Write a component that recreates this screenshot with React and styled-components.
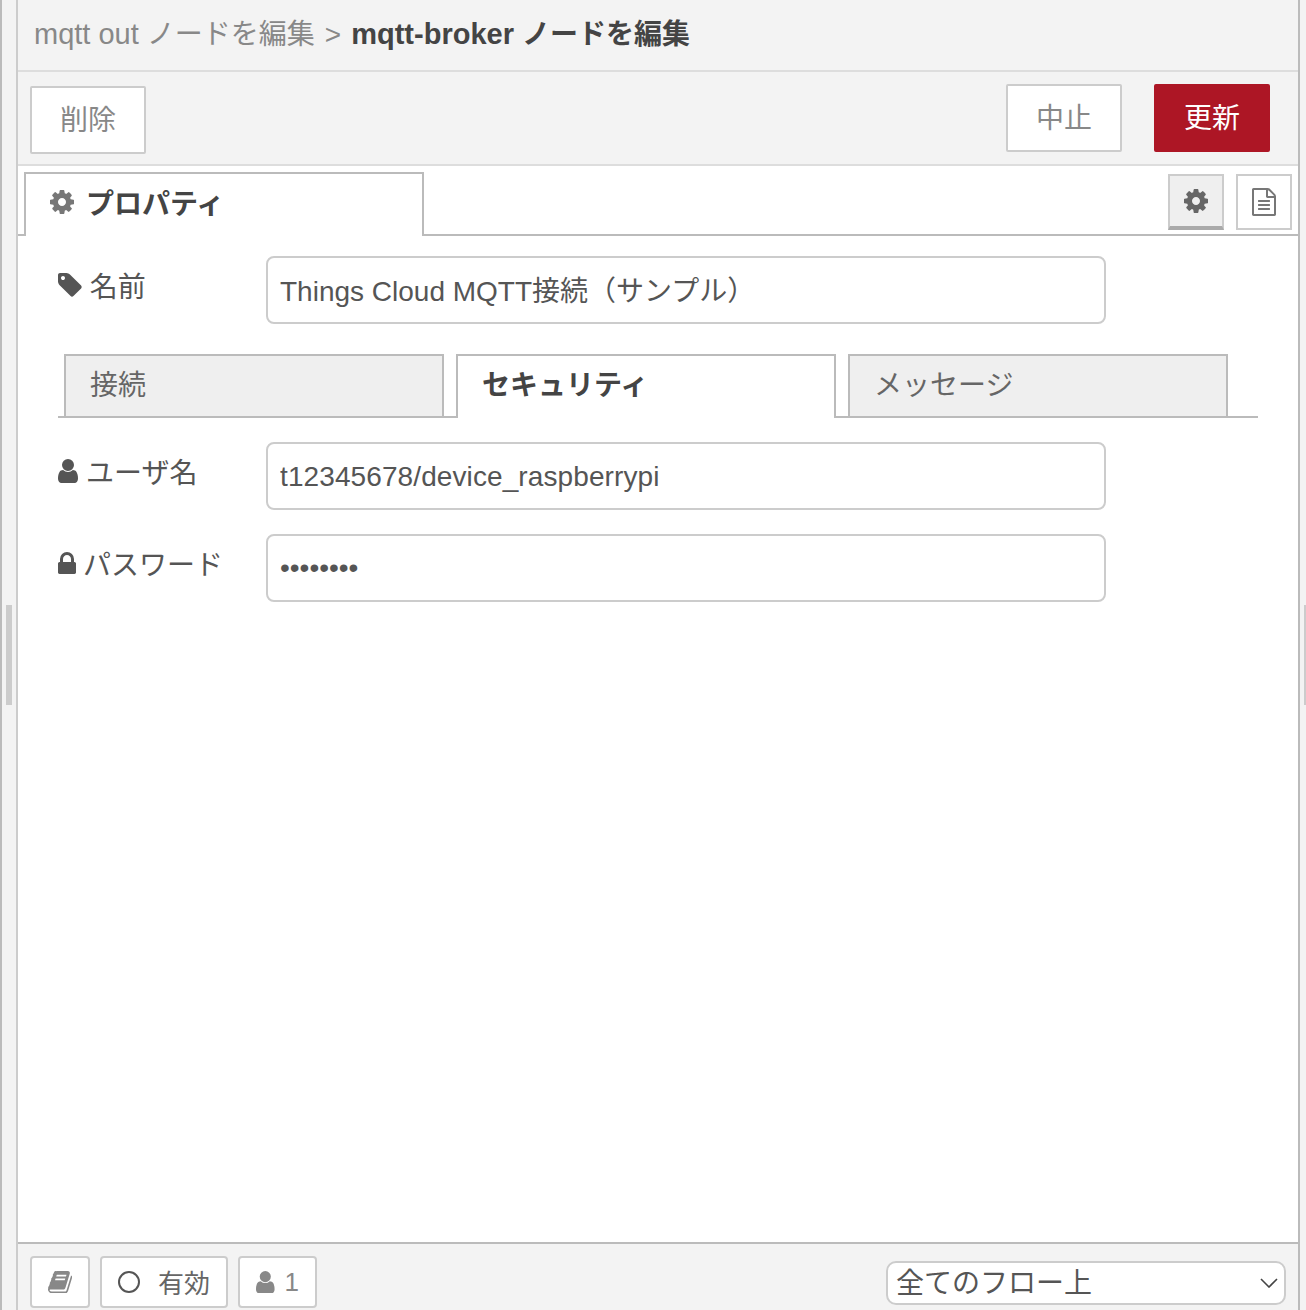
import React from 'react'
import styled, { createGlobalStyle } from 'styled-components'

const FONT = `"Liberation Sans", "Noto Sans CJK JP", sans-serif`

const Global = createGlobalStyle`
  html, body { margin: 0; padding: 0; background: #fff; }
  body { font-family: ${FONT}; overflow: hidden; }
  * { box-sizing: border-box; }
`

// font-awesome 4 glyphs, the tray uses them everywhere. box = x y w h of the glyph
const ICONS = {
  cog: {
    box: [128, 128, 1536, 1536],
    d: 'M1152 896q0-106-75-181t-181-75-181 75-75 181 75 181 181 75 181-75 75-181zm512-109v222q0 12-8 23t-20 13l-185 28q-19 54-39 91 35 50 107 138 10 12 10 25t-9 23q-27 37-99 108t-94 71q-12 0-26-9l-138-108q-44 23-91 38-16 136-29 186-7 28-36 28h-222q-14 0-24.500-8.500t-11.500-21.500l-28-184q-49-16-90-37l-141 107q-10 9-25 9-14 0-25-11-126-114-165-168-7-10-7-23 0-12 8-23 15-21 51-66.500t54-70.500q-27-50-41-99l-183-27q-13-2-21-12.500t-8-23.500v-222q0-12 8-23t19-13l186-28q14-46 39-92-40-57-107-138-10-12-10-24 0-10 9-23 26-36 98.500-107.500t94.500-71.500q13 0 26 10l138 107q44-23 91-38 16-136 29-186 7-28 36-28h222q14 0 24.500 8.500t11.500 21.500l28 184q49 16 90 37l142-107q9-9 24-9 13 0 25 10 129 119 165 170 7 8 7 22 0 12-8 23-15 21-51 66.500t-54 70.500q26 50 41 98l183 28q13 2 21 12.500t8 23.500z'
  },
  user: {
    box: [256, 128, 1280, 1536],
    d: 'M1536 1399q0 109-62.500 187t-150.500 78h-854q-88 0-150.500-78t-62.500-187q0-85 8.500-160.500t31.500-152 58.500-131 94-89 134.500-34.500q131 128 313 128t313-128q76 0 134.500 34.500t94 89 58.500 131 31.500 152 8.500 160.500zm-256-887q0 159-112.500 271.500t-271.500 112.500-271.500-112.500-112.500-271.500 112.500-271.500 271.500-112.500 271.500 112.500 112.500 271.500z'
  },
  lock: {
    box: [320, 128, 1152, 1408],
    d: 'M640 768h512v-192q0-106-75-181t-181-75-181 75-75 181v192zm832 96v576q0 40-28 68t-68 28h-960q-40 0-68-28t-28-68v-576q0-40 28-68t68-28h32v-192q0-184 132-316t316-132 316 132 132 316v192h32q40 0 68 28t28 68z'
  },
  tag: {
    box: [128, 128, 1515, 1536],
    d: 'M576 448q0-53-37.500-90.500t-90.500-37.500-90.500 37.500-37.500 90.500 37.500 90.500 90.500 37.500 90.500-37.500 37.500-90.500zm1067 576q0 53-37 90l-491 492q-39 37-91 37-53 0-90-37l-715-716q-38-37-64.500-101t-26.500-117v-416q0-52 38-90t90-38h416q53 0 117 26.500t102 64.500l715 714q37 39 37 91z'
  },
  file: {
    box: [128, 0, 1536, 1792],
    d: 'M1596 380q28 28 48 76t20 88v1152q0 40-28 68t-68 28h-1344q-40 0-68-28t-28-68v-1600q0-40 28-68t68-28h896q40 0 88 20t76 48zm-444-244v376h376q-10-29-22-41l-313-313q-12-12-41-22zm384 1528v-1024h-416q-40 0-68-28t-28-68v-416h-768v1536h1280zm-1024-864q0-14 9-23t23-9h704q14 0 23 9t9 23v64q0 14-9 23t-23 9h-704q-14 0-23-9t-9-23v-64zm736 224q14 0 23 9t9 23v64q0 14-9 23t-23 9h-704q-14 0-23-9t-9-23v-64q0-14 9-23t23-9h704zm0 256q14 0 23 9t9 23v64q0 14-9 23t-23 9h-704q-14 0-23-9t-9-23v-64q0-14 9-23t23-9h704z'
  },
  book: {
    box: [64, 128, 1664, 1536],
    d: 'M1703 478q40 57 18 129l-275 906q-19 64-76.500 107.500t-122.500 43.500h-923q-77 0-148.500-53.500t-99.500-131.500q-24-67-2-127 0-4 3-27t4-37q1-8-3-21.500t-3-19.500q2-11 8-21t16.500-23.500 16.500-23.500q23-38 45-91.500t30-91.500q3-10 .5-30t-.5-28q3-11 17-28t17-23q21-36 42-92t25-90q1-9-2.500-32t.5-28q4-13 22-30.500t22-22.500q19-26 42.500-84.500t27.500-96.500q1-8-3-25.500t-2-26.500q2-8 9-18t18-23 17-21q8-12 16.500-30.500t15-35 16-36 19.500-32 26.500-23.500 36-11.500 47.500 5.500l-1 3q38-9 51-9h761q74 0 114 56t18 130l-274 906q-36 119-71.500 153.500t-128.500 34.500h-869q-27 0-38 15-11 16-1 43 24 70 144 70h923q29 0 56-15.500t35-41.500l300-987q7-22 5-57 38 15 59 43zm-1064 2q-4 13 2 22.500t20 9.500h608q13 0 25.500-9.500t16.500-22.500l21-64q4-13-2-22.500t-20-9.500h-608q-13 0-25.500 9.500t-16.500 22.500zm-83 256q-4 13 2 22.500t20 9.500h608q13 0 25.500-9.500t16.500-22.500l21-64q4-13-2-22.500t-20-9.500h-608q-13 0-25.500 9.500t-16.500 22.500z'
  }
}

function Icon ({ name, size = 28, color = '#555' }) {
  const { box, d } = ICONS[name]
  return (
    <svg width={box[2] * size / 1792} height={box[3] * size / 1792} viewBox={box.join(' ')} style={{ flex: 'none' }}>
      <path d={d} fill={color} />
    </svg>
  )
}

function Chevron () {
  return (
    <svg width="18" height="10" viewBox="0 0 18 10">
      <path d="M1 1L9 9L17 1" fill="none" stroke="#444" strokeWidth="1.6" />
    </svg>
  )
}

export default function App () {
  return (
    <Page>
      <Global />
      <SideStrip>
        <LeftGrip />
      </SideStrip>
      <Tray>
        <Header>
          <span><Latin>mqtt out </Latin>ノードを編集</span>
          <Sep>&gt;</Sep>
          <strong><Latin>mqtt-broker </Latin>ノードを編集</strong>
        </Header>
        <Toolbar>
          <ToolButton $top={2} $lift={4}>削除</ToolButton>
          <ToolRight>
            <ToolButton $lift={4}>中止</ToolButton>
            <ToolButton $primary $lift={4}>更新</ToolButton>
          </ToolRight>
        </Toolbar>
        <TabBar>
          <MainTab>
            <Icon name="cog" size={28} color="#777" />
            <span>プロパティ</span>
          </MainTab>
          <TabIcons>
            <IconTab $active><Icon name="cog" size={28} color="#666" /></IconTab>
            <IconTab><Icon name="file" size={28} color="#777" /></IconTab>
          </TabIcons>
        </TabBar>
        <Body>
          <FormRow $mb={30}>
            <Label $gap={8}>
              <Icon name="tag" />
              <span>名前</span>
            </Label>
            <TextInput $shift={-2} defaultValue="Things Cloud MQTT接続（サンプル）" />
          </FormRow>
          <SubTabs>
            <SubTab>接続</SubTab>
            <SubTab $active>セキュリティ</SubTab>
            <SubTab>メッセージ</SubTab>
          </SubTabs>
          <FormRow $mb={24}>
            <Label $gap={8}>
              <Icon name="user" />
              <span>ユーザ名</span>
            </Label>
            <TextInput $shift={2} $track={0.1} defaultValue="t12345678/device_raspberrypi" />
          </FormRow>
          <FormRow>
            <Label $gap={7}>
              <Icon name="lock" />
              <span>パスワード</span>
            </Label>
            <TextInput type="password" defaultValue="password" />
          </FormRow>
        </Body>
        <Footer>
          <FootButton $w={60}><Icon name="book" size={26} color="#888" /></FootButton>
          <FootButton $w={128}>
            <Ring />
            <FootLabel>有効</FootLabel>
          </FootButton>
          <FootButton $w={79}>
            <Icon name="user" size={26} color="#888" />
            <Count>1</Count>
          </FootButton>
          <ScopeSelect>
            <span>全てのフロー上</span>
            <Chevron />
          </ScopeSelect>
        </Footer>
      </Tray>
      <RightStrip>
        <RightGrip />
      </RightStrip>
    </Page>
  )
}

const Page = styled.div`
  display: flex;
  width: 1306px;
  height: 1310px;
  overflow: hidden;
  background: #f3f3f3;
`

const SideStrip = styled.div`
  width: 18px;
  flex: none;
  display: flex;
  align-items: center;
  padding-left: 4px;
  border-left: 2px solid #bbb;
  border-right: 2px solid #ccc;
`

const LeftGrip = styled.div`
  width: 6px;
  height: 100px;
  background: #ccc;
`

const RightStrip = styled.div`
  width: 8px;
  flex: none;
  display: flex;
  align-items: center;
  justify-content: flex-end;
  border-left: 2px solid #bbb;
`

const RightGrip = styled.div`
  width: 2px;
  height: 100px;
  background: #ccc;
`

const Tray = styled.div`
  flex: 1;
  display: flex;
  flex-direction: column;
  min-width: 0;
  background: #fff;
`

const Header = styled.div`
  height: 72px;
  flex: none;
  display: flex;
  align-items: center;
  padding: 0 0 6px 16px;
  background: #f3f3f3;
  border-bottom: 2px solid #ddd;
  font-size: 28px;
  color: #888;
  white-space: pre;
  strong { color: #444; font-weight: 700; }
`

const Latin = styled.span`
  font-size: 29px;
`

const Sep = styled.span`
  margin: 5px 10px 0;
`

const Toolbar = styled.div`
  height: 94px;
  flex: none;
  display: flex;
  justify-content: space-between;
  align-items: flex-start;
  padding: 12px 28px 0 12px;
  background: #f3f3f3;
  border-bottom: 2px solid #ddd;
`

const ToolRight = styled.div`
  display: flex;
  gap: 32px;
`

const ToolButton = styled.div`
  width: 116px;
  height: 68px;
  margin-top: ${p => p.$top || 0}px;
  padding-bottom: ${p => p.$lift || 0}px;
  display: flex;
  align-items: center;
  justify-content: center;
  font-size: 28px;
  border-radius: 2px;
  color: ${p => (p.$primary ? '#fff' : '#888')};
  background: ${p => (p.$primary ? '#ad1625' : '#fff')};
  border: 2px solid ${p => (p.$primary ? '#ad1625' : '#ccc')};
`

const TabBar = styled.div`
  height: 70px;
  flex: none;
  display: flex;
  justify-content: space-between;
  padding: 6px 6px 0 6px;
  border-bottom: 2px solid #bbb;
`

const MainTab = styled.div`
  width: 400px;
  height: 64px;
  display: flex;
  align-items: center;
  gap: 12px;
  padding: 0 0 6px 24px;
  background: #fff;
  border: 2px solid #bbb;
  border-bottom: none;
  font-size: 28px;
  font-weight: 700;
  color: #444;
`

const TabIcons = styled.div`
  display: flex;
  gap: 12px;
  padding-top: 2px;
`

const IconTab = styled.div`
  width: 56px;
  height: 56px;
  display: flex;
  align-items: center;
  justify-content: center;
  border: 2px solid #ccc;
  border-bottom: ${p => (p.$active ? '4px solid #aaa' : '2px solid #ccc')};
  background: ${p => (p.$active ? '#efefef' : '#fff')};
`

const Body = styled.div`
  flex: 1;
  padding: 20px 40px 0;
`

const FormRow = styled.div`
  display: flex;
  align-items: flex-start;
  margin-bottom: ${p => p.$mb || 0}px;
`

const Label = styled.div`
  width: 208px;
  flex: none;
  display: flex;
  align-items: center;
  gap: ${p => p.$gap}px;
  padding-top: 9px;
  font-size: 28px;
  color: #555;
`

const TextInput = styled.input`
  width: 840px;
  height: 68px;
  padding: ${p => Math.max(p.$shift || 0, 0)}px 12px ${p => Math.max(-(p.$shift || 0), 0)}px;
  border: 2px solid #ccc;
  border-radius: 8px;
  outline: none;
  background: #fff;
  font-family: ${FONT};
  font-size: 28px;
  letter-spacing: ${p => p.$track || 0}px;
  color: #555;
`

const SubTabs = styled.div`
  width: 1200px;
  height: 64px;
  display: flex;
  gap: 12px;
  padding-left: 6px;
  margin-bottom: 24px;
  border-bottom: 2px solid #bbb;
`

const SubTab = styled.div`
  width: 380px;
  height: ${p => (p.$active ? 64 : 62)}px;
  display: flex;
  align-items: center;
  padding: 0 0 ${p => (p.$active ? 8 : 6)}px 24px;
  border: 2px solid #bbb;
  border-bottom: none;
  background: ${p => (p.$active ? '#fff' : '#efefef')};
  font-size: 28px;
  font-weight: ${p => (p.$active ? 700 : 400)};
  color: ${p => (p.$active ? '#444' : '#666')};
`

const Footer = styled.div`
  height: 68px;
  flex: none;
  display: flex;
  align-items: flex-start;
  gap: 10px;
  padding: 12px 12px 0 12px;
  background: #f3f3f3;
  border-top: 2px solid #bbb;
`

const FootButton = styled.div`
  width: ${p => p.$w}px;
  height: 52px;
  display: flex;
  align-items: center;
  justify-content: center;
  gap: 18px;
  background: #fff;
  border: 2px solid #ccc;
  border-radius: 4px;
  font-size: 26px;
  color: #666;
`

const FootLabel = styled.span`
  margin-bottom: 2px;
`

const Ring = styled.div`
  width: 22px;
  height: 22px;
  border: 2px solid #555;
  border-radius: 50%;
`

const Count = styled.span`
  margin-left: -8px;
  font-size: 26px;
  color: #888;
`

const ScopeSelect = styled.div`
  width: 400px;
  height: 44px;
  margin: 5px 0 0 auto;
  display: flex;
  align-items: center;
  justify-content: space-between;
  padding: 0 6px 4px 8px;
  background: #fff;
  border: 2px solid #ccc;
  border-radius: 10px;
  font-size: 28px;
  color: #555;
  svg { margin-top: 4px; }
`
